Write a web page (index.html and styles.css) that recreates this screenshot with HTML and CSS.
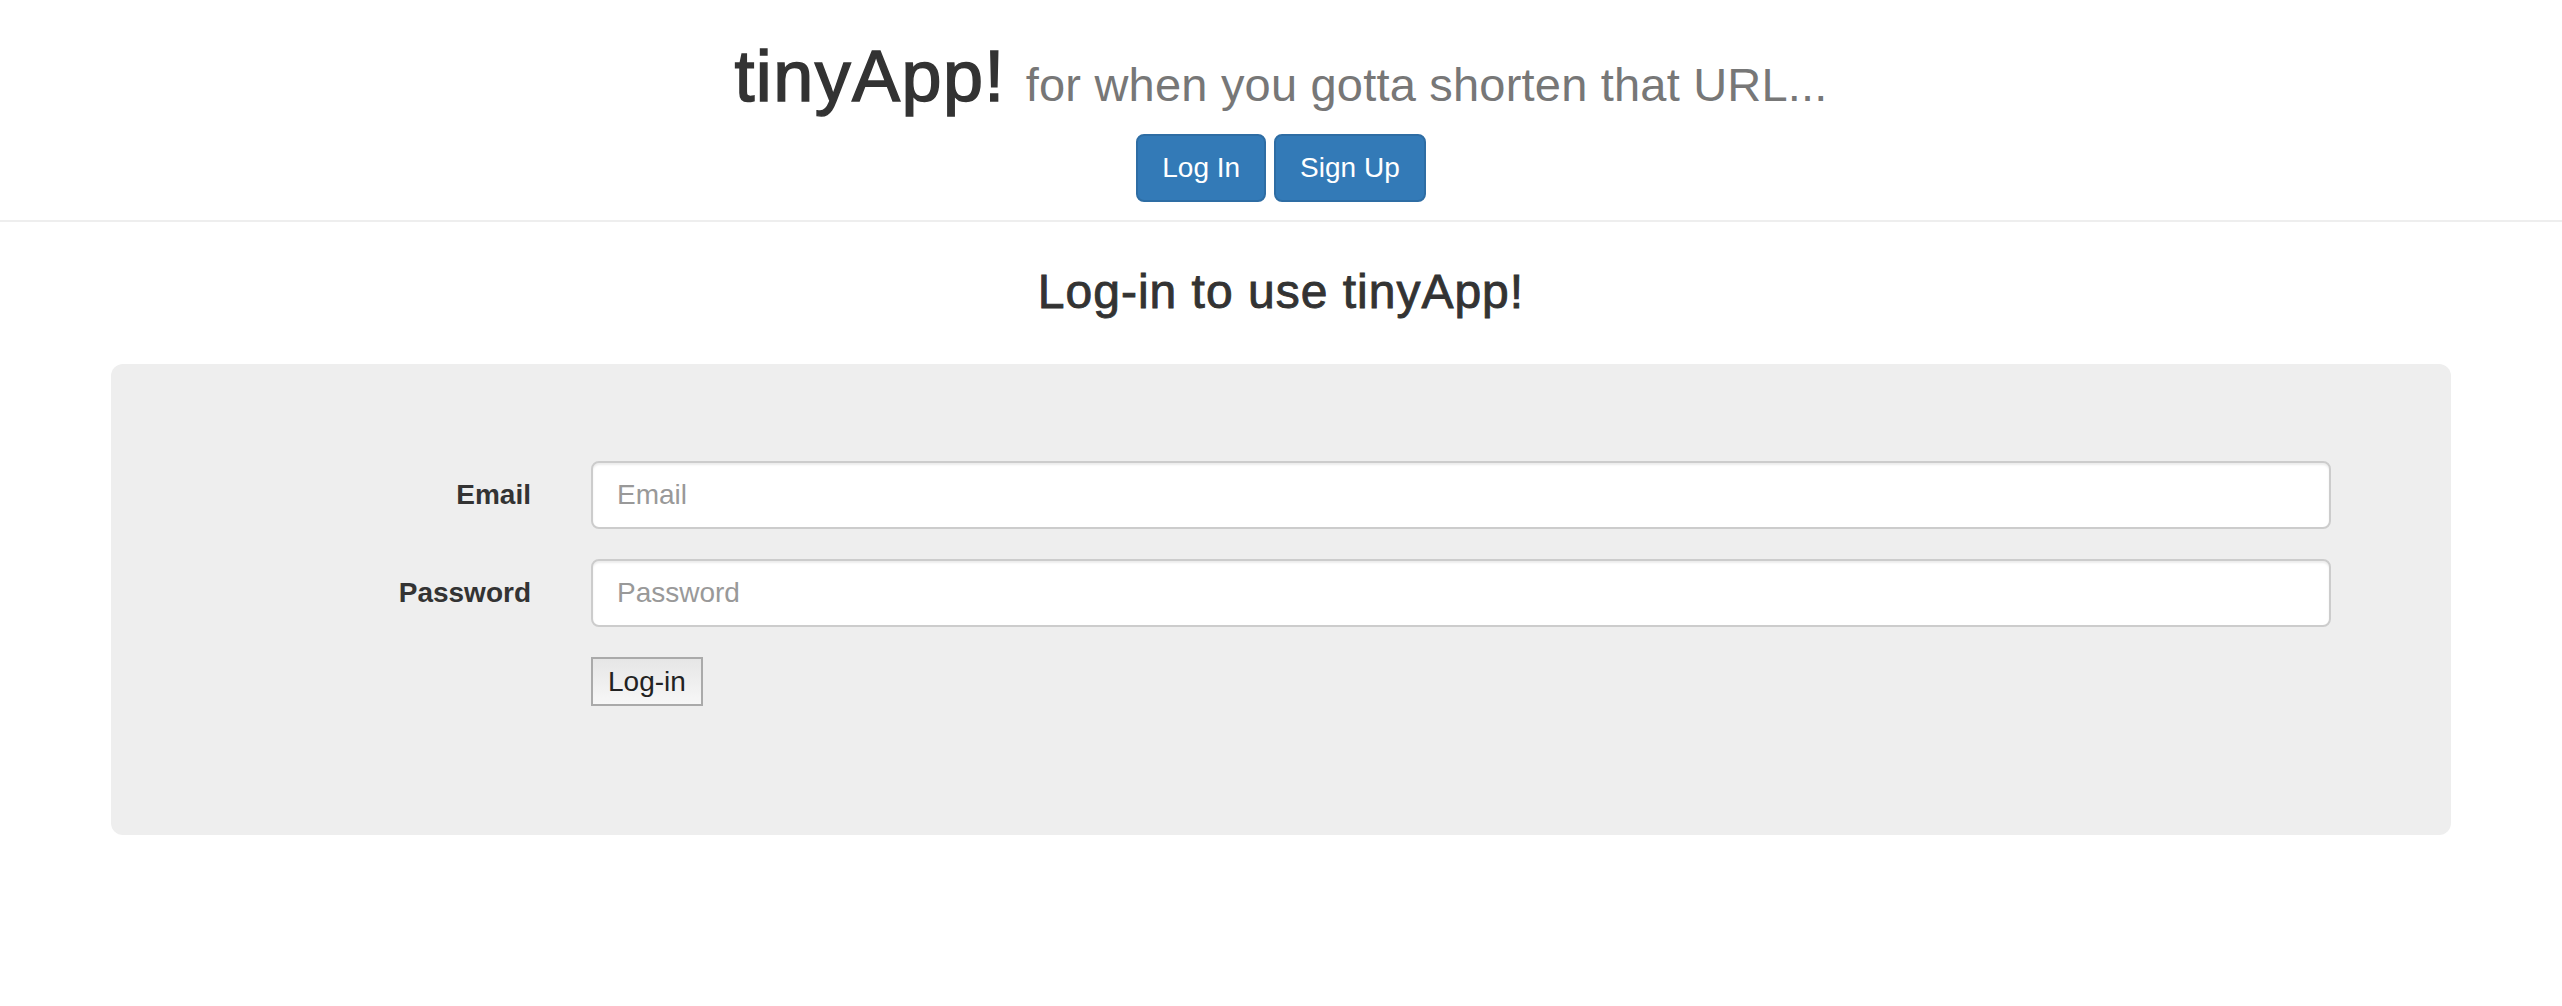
FILE: index.html
```html
<!DOCTYPE html>
<html lang="en">
<head>
<meta charset="utf-8">
<title>tinyApp</title>
<link rel="stylesheet" href="styles.css">
</head>
<body>
<header class="page-header">
  <h1 class="brand"><span class="brand-name">tinyApp!</span> <small class="tagline">for when you gotta shorten that URL...</small></h1>
  <div class="header-actions">
    <a class="btn btn-primary" href="#">Log In</a>
    <a class="btn btn-primary" href="#">Sign Up</a>
  </div>
</header>
<main>
  <h3 class="section-title">Log-in to use tinyApp!</h3>
  <div class="jumbotron">
    <form class="login-form">
      <div class="form-row">
        <label class="form-label" for="email">Email</label>
        <input class="form-control" id="email" type="email" placeholder="Email">
      </div>
      <div class="form-row">
        <label class="form-label" for="password">Password</label>
        <input class="form-control" id="password" type="password" placeholder="Password">
      </div>
      <div class="form-row">
        <button class="submit-btn" type="submit">Log-in</button>
      </div>
    </form>
  </div>
</main>
</body>
</html>
```

FILE: styles.css
```css
* {
  box-sizing: border-box;
}

html, body {
  margin: 0;
  padding: 0;
  background: #fff;
}

body {
  font-family: "Liberation Sans", Arial, Helvetica, sans-serif;
  font-size: 28px;
  line-height: 40px;
  color: #333;
}

.page-header {
  text-align: center;
  padding: 37px 0 18px;
  border-bottom: 2px solid #eee;
  margin: 0;
}

.brand {
  margin: 0 0 10px;
  font-size: 72px;
  line-height: 79px;
  font-weight: 500;
  color: #333;
}

.brand-name {
  letter-spacing: 1.4px;
  -webkit-text-stroke: 1.5px #333;
}

.tagline {
  font-size: 47px;
  font-weight: normal;
  color: #777;
  letter-spacing: 0.2px;
}

.header-actions {
  display: flex;
  justify-content: center;
  gap: 8px;
}

.btn {
  display: inline-block;
  padding: 12px 24px;
  font-size: 28px;
  line-height: 40px;
  border: 2px solid transparent;
  border-radius: 8px;
  text-decoration: none;
  text-align: center;
}

.btn-primary {
  background: #337ab7;
  border-color: #2e6da4;
  color: #fff;
}

.section-title {
  margin: 43px 0 46px;
  text-align: center;
  font-size: 48px;
  line-height: 53px;
  font-weight: 500;
  color: #333;
  letter-spacing: 1px;
  -webkit-text-stroke: 0.9px #333;
}

.jumbotron {
  width: 2340px;
  margin: 0 auto;
  padding: 97px 120px 99px;
  background: #eee;
  border-radius: 12px;
}

.login-form {
  margin: 0;
}

.form-row {
  display: grid;
  grid-template-columns: 300px 1fr;
  column-gap: 60px;
  margin-bottom: 30px;
}

.form-label {
  text-align: right;
  font-weight: bold;
  padding-top: 14px;
  color: #333;
}

.form-control {
  display: block;
  width: 100%;
  height: 68px;
  padding: 12px 24px;
  font-family: inherit;
  font-size: 28px;
  line-height: 40px;
  color: #555;
  background: #fff;
  border: 2px solid #ccc;
  border-radius: 8px;
  box-shadow: inset 0 2px 2px rgba(0, 0, 0, 0.075);
  outline: none;
}

.form-control::placeholder {
  color: #999;
}

.submit-btn {
  grid-column: 2;
  justify-self: start;
  height: 49px;
  padding: 0 15px;
  font-family: inherit;
  font-size: 28px;
  line-height: 45px;
  color: #222;
  background: linear-gradient(#e6e6e6, #f7f7f7);
  border: 2px solid #aaa;
  border-radius: 0;
}
```
